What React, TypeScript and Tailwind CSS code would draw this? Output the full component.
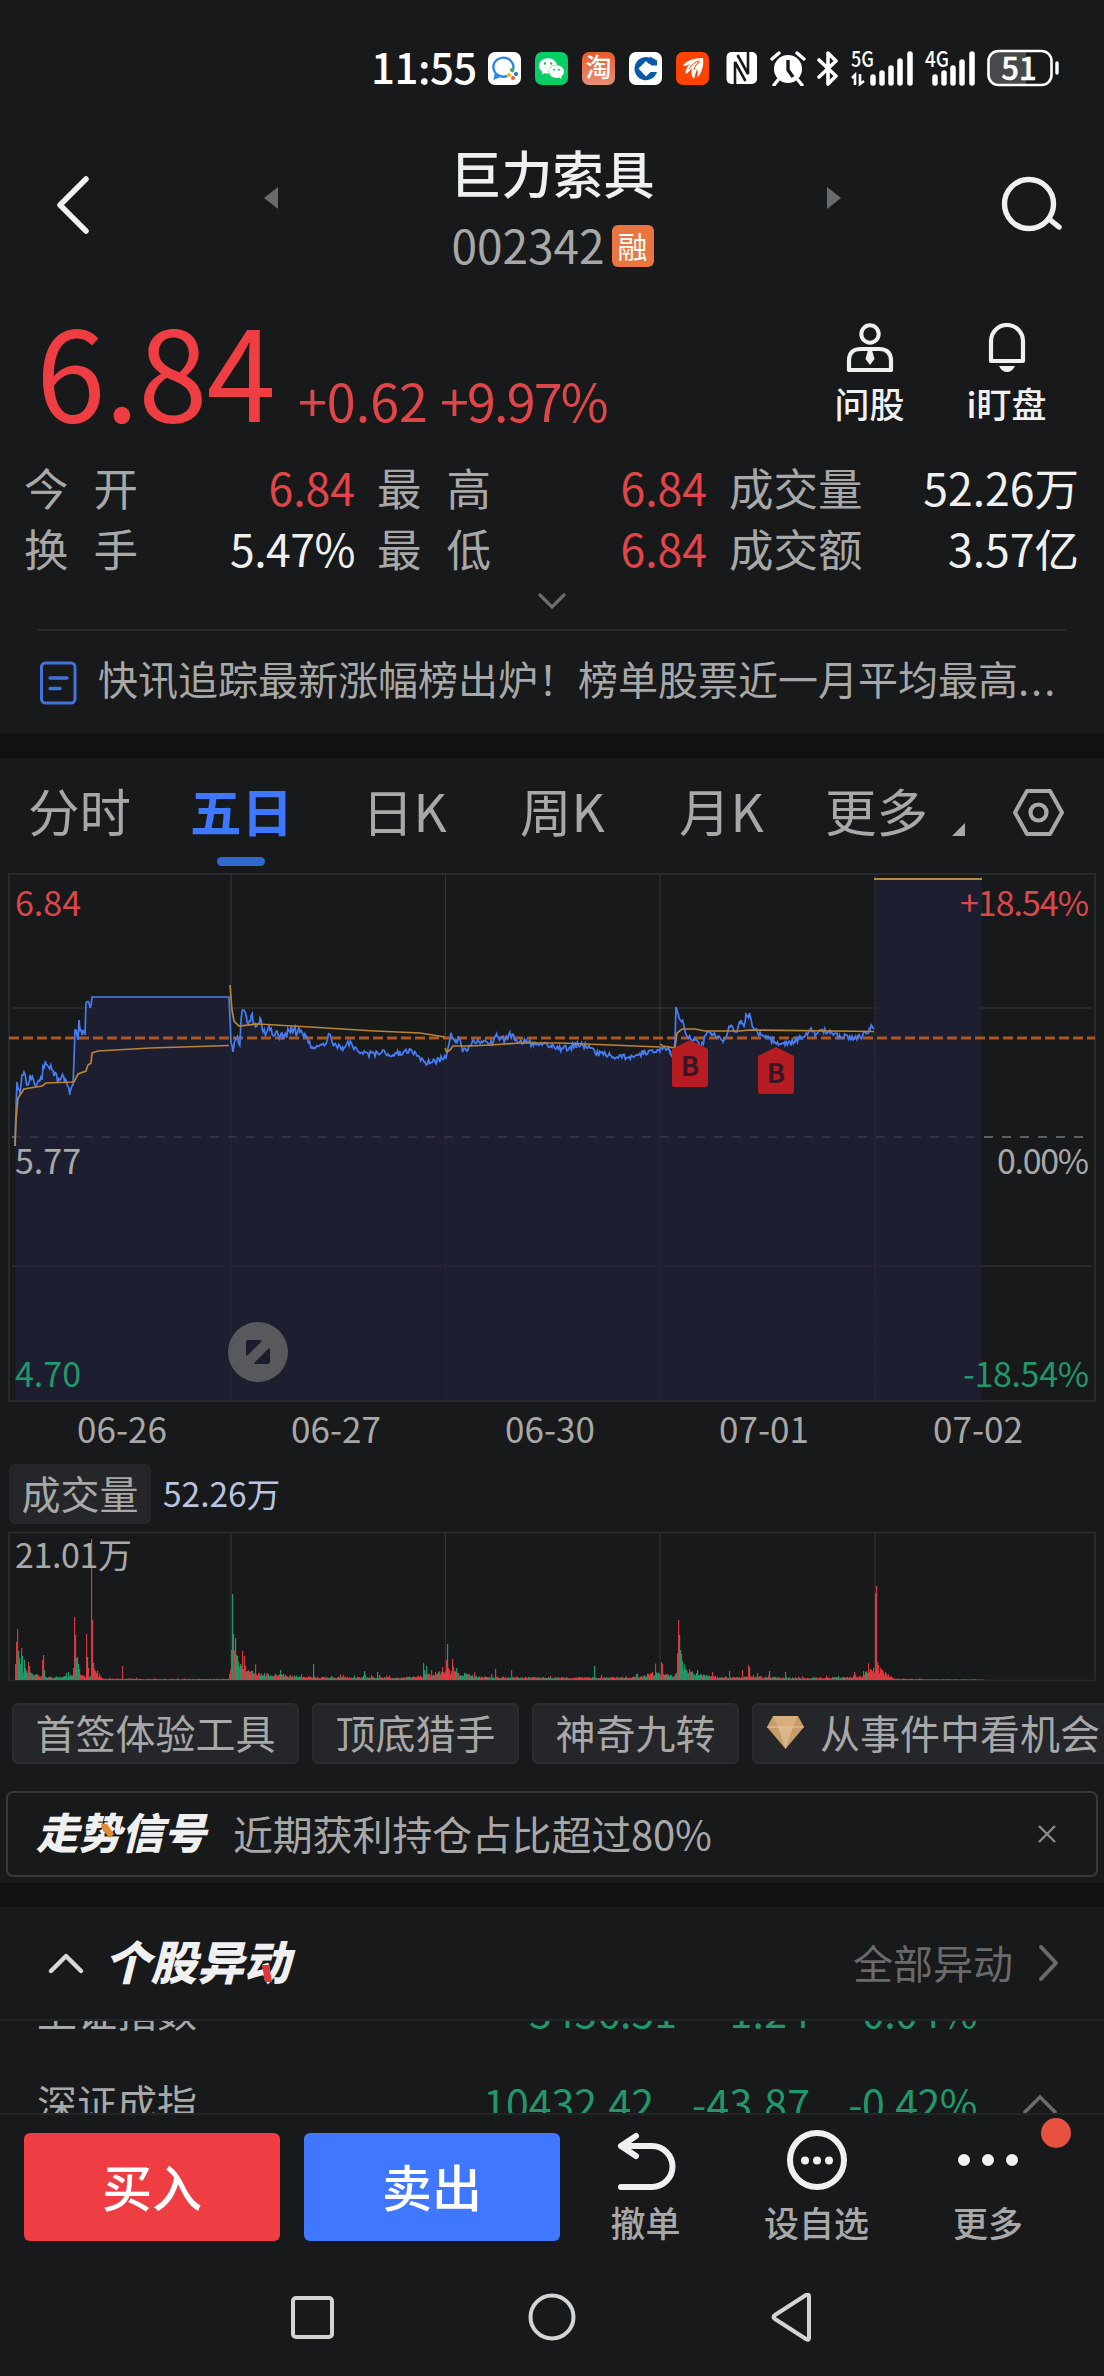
import React from 'react';
import { SiWechat } from 'react-icons/si';

type Point = [number, number];
type Spike = [number, number, 'r' | 'g'];

const RED = '#d8393e';
const GREEN = '#22976a';

const stats = [
  { label: ['今', '开'], value: '6.84', tone: 'text-[#e24549]' },
  { label: ['最', '高'], value: '6.84', tone: 'text-[#e24549]' },
  { label: ['成', '交', '量'], value: '52.26万', tone: 'text-[#f0f0f0]' },
  { label: ['换', '手'], value: '5.47%', tone: 'text-[#f0f0f0] tracking-[-0.5px]' },
  { label: ['最', '低'], value: '6.84', tone: 'text-[#e24549]' },
  { label: ['成', '交', '额'], value: '3.57亿', tone: 'text-[#f0f0f0]' },
];

const tabs = [
  { label: '分时', width: 'w-[162px]' },
  { label: '五日', width: 'w-[172px]', active: true },
  { label: '日K', width: 'w-[158px]' },
  { label: '周K', width: 'w-[159px]' },
  { label: '月K', width: 'w-[146px]' },
  { label: '更多', width: 'w-[127px]' },
];

const dates = ['06-26', '06-27', '06-30', '07-01', '07-02'];
const tools = ['首签体验工具', '顶底猎手', '神奇九转'];

const indices = [
  { name: '上证指数', value: '3456.51', change: '-1.24', percent: '-0.04%' },
  { name: '深证成指', value: '10432.42', change: '-43.87', percent: '-0.42%' },
];

const pricePoints: Point[] = [
  [15, 1146], [17, 1082], [20, 1094], [22, 1075], [24, 1072], [27, 1085], [30, 1075], [36, 1086], [42, 1080],
  [43, 1066], [46, 1064], [52, 1070], [54, 1076], [60, 1080], [65, 1078], [70, 1092], [73, 1085], [74, 1060],
  [75, 1030], [78, 1040], [79, 1020], [82, 1035], [85, 1035], [86, 1003], [90, 1008], [92, 997], [229, 997],
  [231, 1042], [233, 1052], [235, 1040], [240, 1042], [241, 1020], [243, 1010], [247, 1022], [251, 1016],
  [256, 1024], [260, 1018], [263, 1032], [270, 1030], [283, 1038], [289, 1030], [300, 1032], [306, 1036],
  [312, 1048], [322, 1044], [325, 1045], [329, 1034], [334, 1044], [343, 1050], [348, 1042], [363, 1054],
  [378, 1054], [383, 1050], [388, 1054], [400, 1053], [410, 1050], [417, 1056], [425, 1062], [435, 1062],
  [445, 1057], [446, 1058], [448, 1048], [451, 1033], [456, 1040], [459, 1038], [463, 1051], [470, 1046],
  [473, 1040], [493, 1043], [497, 1036], [505, 1040], [510, 1034], [516, 1040], [525, 1042], [535, 1044],
  [552, 1045], [556, 1049], [569, 1048], [578, 1044], [590, 1048], [595, 1053], [610, 1055], [617, 1057],
  [635, 1056], [645, 1052], [655, 1052], [660, 1049], [670, 1050], [673, 1058], [675, 1040], [676, 1007],
  [679, 1018], [683, 1022], [686, 1034], [695, 1040], [701, 1048], [707, 1032], [712, 1034], [718, 1036],
  [723, 1042], [730, 1027], [737, 1032], [741, 1020], [744, 1026], [746, 1014], [750, 1016], [754, 1030],
  [762, 1035], [775, 1042], [785, 1045], [795, 1042], [800, 1036], [805, 1036], [811, 1028], [815, 1036],
  [820, 1030], [830, 1033], [840, 1037], [860, 1037], [870, 1030], [872, 1026], [874, 1029],
];

const averageDays = [
  '15,1146 16,1120 18,1098 24,1089 42,1086 46,1083 74,1082 78,1074 86,1071 88,1065 91,1063 92,1053 98,1051 150,1048 229,1045.5',
  '230,985 231,998 232,1010 234,1021 239,1026 258,1024 310,1027 375,1031 420,1033 445,1037',
  '445,1048 447,1052 450,1050 453,1046 470,1046 490,1045 520,1043 560,1043 610,1045 660,1047',
  '660,1044 663,1046 675,1048 677,1033 682,1029 695,1029 705,1031 740,1031 750,1030 874,1031.5',
];

const spikes: Spike[] = [
  [15, 16, 'r'], [16, 38, 'r'], [17, 51, 'r'], [18, 29, 'g'], [19, 22, 'g'], [20, 16, 'g'], [21, 32, 'r'], [22, 24, 'g'],
  [24, 20, 'g'], [25, 12, 'g'], [28, 18, 'r'], [29, 14, 'r'], [42, 20, 'r'], [43, 25, 'r'], [44, 10, 'g'],
  [66, 7, 'g'], [68, 8, 'g'], [73, 12, 'r'], [74, 63, 'r'], [75, 45, 'r'], [76, 22, 'g'], [77, 23, 'r'], [78, 16, 'g'], [79, 11, 'r'],
  [86, 46, 'r'], [87, 23, 'g'], [88, 12, 'r'], [91, 141, 'r'], [92, 60, 'r'], [93, 17, 'r'], [94, 11, 'r'], [95, 9, 'r'], [96, 7, 'r'],
  [122, 14, 'r'], [231, 30, 'r'], [232, 86, 'g'], [233, 46, 'r'], [234, 30, 'r'], [235, 42, 'g'], [236, 25, 'g'], [237, 24, 'g'],
  [238, 18, 'g'], [239, 13, 'r'], [240, 16, 'g'], [241, 14, 'r'], [242, 29, 'r'], [244, 24, 'r'], [245, 14, 'r'], [313, 16, 'g'],
  [364, 9, 'g'], [377, 8, 'g'], [423, 17, 'g'], [424, 10, 'g'], [426, 14, 'g'], [446, 20, 'r'], [447, 36, 'g'], [448, 12, 'r'],
  [452, 21, 'r'], [453, 13, 'r'], [456, 12, 'g'], [495, 11, 'r'], [511, 10, 'r'], [594, 14, 'g'], [661, 18, 'r'], [662, 16, 'r'],
  [677, 27, 'r'], [678, 60, 'r'], [679, 45, 'g'], [680, 30, 'g'], [681, 26, 'r'], [682, 19, 'g'], [684, 13, 'g'], [686, 10, 'g'],
  [697, 10, 'g'], [712, 8, 'r'], [729, 9, 'r'], [742, 10, 'r'], [748, 15, 'r'], [749, 13, 'g'], [757, 7, 'g'], [769, 9, 'g'],
  [785, 8, 'g'], [854, 8, 'r'], [863, 9, 'r'], [869, 8, 'r'], [871, 10, 'r'], [873, 12, 'r'], [875, 87, 'r'], [876, 94, 'r'],
  [877, 18, 'r'], [878, 15, 'r'], [880, 12, 'r'], [882, 9, 'r'], [886, 6, 'r'],
];

// [x, average height, share of green bars]
const volumeLevels: [number, number, number][] = [
  [14, 10, 0.5], [30, 8, 0.6], [40, 4, 0.5], [50, 3, 0.6], [72, 4, 0.6], [80, 6, 0.5], [84, 3, 0.5], [97, 5, 0], [102, 1.5, 0.05],
  [150, 1, 0.1], [228, 1, 0], [231, 14, 0.5], [250, 8, 0.5], [290, 4, 0.4], [320, 3, 0.4], [400, 2.5, 0.4], [420, 4, 0.3],
  [445, 9, 0.2], [460, 7, 0.5], [480, 3, 0.5], [560, 2.5, 0.3], [640, 3, 0.5], [655, 8, 0.5], [672, 4, 0.5], [682, 12, 0.8],
  [700, 5, 0.5], [720, 2.5, 0.4], [760, 3, 0.5], [800, 2, 0.2], [860, 3, 0.1], [870, 10, 0], [878, 11, 0], [888, 5, 0],
  [894, 1.5, 0], [920, 0.8, 0], [983, 0.5, 0], [984, 0, 0],
];

const random = (seed: number) => () => {
  seed = (seed * 16807) % 2147483647;
  return seed / 2147483647;
};

const jitter = (points: Point[]) => {
  const next = random(97);
  const out: Point[] = [];
  points.forEach(([x, y], i) => {
    out.push([x, y]);
    const following = points[i + 1];
    if (!following) return;
    const [nx, ny] = following;
    const flat = y === 997 && ny === 997;
    for (let s = x + 1.2; s < nx && !flat; s += 1.2) {
      const amp = s < 110 || (s > 230 && s < 300) ? 10 : 6;
      out.push([s, y + ((ny - y) * (s - x)) / (nx - x) + (next() - 0.5) * amp]);
    }
  });
  return out.map((p) => `${p[0].toFixed(1)},${p[1].toFixed(1)}`).join(' ');
};

const priceLine = jitter(pricePoints);

const buildVolume = () => {
  const next = random(31);
  const bars: { x: number; h: number; color: string }[] = [];
  for (let x = 15; x < 984; x++) {
    const i = volumeLevels.findIndex((l) => l[0] > x) - 1;
    const [x0, h0, green] = volumeLevels[i];
    const [x1, h1] = volumeLevels[i + 1];
    const level = h0 + ((h1 - h0) * (x - x0)) / (x1 - x0);
    const burst = next() > 0.93 ? 1.8 : 1;
    bars.push({ x, h: level * (0.6 + next() * 0.6) * burst, color: next() < green ? GREEN : RED });
  }
  spikes.forEach(([x, h, c]) => bars.push({ x, h, color: c === 'g' ? GREEN : RED }));
  return bars;
};

const volumeBars = buildVolume();
const dayLines = [231, 445.5, 660, 875];

const StatusBar = () => (
  <div className="flex h-[136px] items-center pl-[371px] text-white">
    <span className="-mt-[5px] w-[117px] text-[42px] leading-none font-medium tracking-[-0.5px]">11:55</span>
    <div className="flex gap-[14px]">
      <svg className="h-[33px] w-[33px]" viewBox="0 0 33 33">
        <rect width="33" height="33" rx="7" fill="#fff" />
        <path d="M24 20a10 9.5 0 1 0-5 4M8 21l-1 5 5-2" fill="none" stroke="#2a86e8" strokeWidth="2.4" />
        <circle cx="24" cy="18" r="2" fill="#3bb54a" />
        <circle cx="21" cy="23" r="2" fill="#f7b500" />
        <circle cx="28" cy="22" r="2" fill="#1b6fd8" />
        <circle cx="25" cy="26" r="2" fill="#f0612c" />
      </svg>
      <span className="flex h-[33px] w-[33px] items-center justify-center rounded-[7px] bg-[#07cf66]">
        <SiWechat size={25} />
      </span>
      <span className="flex h-[33px] w-[33px] items-center justify-center rounded-[7px] bg-linear-to-b from-[#e95b22] to-[#e88d77] text-[26px] leading-[26px] font-medium">
        <span className="-mt-[5px]">淘</span>
      </span>
      <svg className="h-[33px] w-[33px]" viewBox="0 0 33 33">
        <rect width="33" height="33" rx="7" fill="#fff" />
        <path d="M20 5.500A11.500 11.500 0 1 0 28 20h-6.500L17 24.500 9.500 16.500 17 9l3 3 3-3z" fill="#0a5aa8" />
        <path d="M21 4.500l7 4v5h-5.500L19 10z" fill="#0a5aa8" />
      </svg>
      <svg className="h-[33px] w-[33px]" viewBox="0 0 33 33">
        <rect width="33" height="33" rx="7" fill="#ff4400" />
        <path d="M27 6C17 6 9 9 7 14c3 0 5-1 7-2-3 3-5 6-4 10 2-1 4-4 6-6-1 4-1 8 2 11 1-4 2-7 3-10 1 3 1 6 0 9 5-5 7-13 6-20z" fill="#fff" />
        <path d="M13 17c2-4 6-7 10-8M18 18c1-4 3-7 6-8" fill="none" stroke="#ff4400" strokeWidth="1" />
      </svg>
    </div>
    <svg className="ml-[16px] h-[34px] w-[33px]" viewBox="0 0 33 34">
      <rect x="1.500" y="1" width="30.500" height="32" rx="5" fill="#fff" />
      <path d="M10 34V11l10.500 19M23 0v23L12.500 4" fill="none" stroke="#17191a" strokeWidth="2.600" />
    </svg>
    <svg className="ml-[12px] h-[35px] w-[36px]" viewBox="0 0 36 35">
      <circle cx="18" cy="18" r="14" fill="#fff" />
      <path d="M2 8l7-6M34 8l-7-6M8 29l-4 5M28 29l4 5" stroke="#fff" strokeWidth="3.4" strokeLinecap="round" />
      <path d="M18 9v10l5 7" fill="none" stroke="#17191a" strokeWidth="3.4" />
    </svg>
    <svg className="ml-[10px] h-[35px] w-[25px]" viewBox="0 0 25 35">
      <path d="M3 9l17 16-8 8V2l8 8L3 26" fill="none" stroke="#fff" strokeWidth="3.6" strokeLinejoin="round" strokeLinecap="round" />
    </svg>
    <svg className="ml-[10px] h-[36px] w-[64px] overflow-visible" viewBox="0 0 64 36">
      <text x="0" y="17" fontSize="22" fontWeight="500" fill="#fff" textLength="23" lengthAdjust="spacingAndGlyphs">5G</text>
      <path d="M4 35V25l-3 3M9 24v10l4-3" fill="none" stroke="#fff" strokeWidth="2.6" />
      <path d="M22 33v-6M31 33V23M40 33V18M49 33V11M59 33V4" stroke="#fff" strokeWidth="5.5" strokeLinecap="round" />
    </svg>
    <svg className="ml-[10px] h-[36px] w-[52px] overflow-visible" viewBox="0 0 52 36">
      <text x="0" y="17" fontSize="22" fontWeight="500" fill="#fff" textLength="24" lengthAdjust="spacingAndGlyphs">4G</text>
      <path d="M10 33v-6M19 33V23M28 33V18M37 33V12M47 33V4" stroke="#fff" strokeWidth="5.5" strokeLinecap="round" />
    </svg>
    <svg className="ml-[10px] h-[38px] w-[75px] overflow-visible" viewBox="0 0 75 38">
      <path d="M10 2h29v34H10a8 8 0 0 1-8-8V10a8 8 0 0 1 8-8z" fill="#48494b" />
      <rect x="1.5" y="2" width="63" height="34" rx="10" fill="none" stroke="#fff" strokeWidth="2.6" />
      <path d="M70 14v10" stroke="#fff" strokeWidth="3.4" strokeLinecap="round" />
      <text x="32" y="30.500" fontSize="31" fontWeight="500" textAnchor="middle" fill="#fff" stroke="#fff" strokeWidth="0.500">51</text>
    </svg>
  </div>
);

const Header = () => (
  <header className="flex h-[149px] items-start">
    <svg className="mt-[40px] ml-[56px] h-[58px] w-[34px]" viewBox="0 0 34 58">
      <path d="M30 3L4 29l26 26" fill="none" stroke="#f0f0f0" strokeWidth="5.5" strokeLinecap="round" strokeLinejoin="round" />
    </svg>
    <svg className="mt-[50px] ml-[174px] h-[24px] w-[14px]" viewBox="0 0 14 24">
      <path d="M14 1v22L0 12z" fill="#6a6a6a" />
    </svg>
    <div className="flex w-[549px] flex-col items-center">
      <h1 className="mt-[6px] text-[51px] leading-[60px] font-medium text-[#f0f0f0]">巨力索具</h1>
      <div className="mt-[23px] flex h-[42px] items-center gap-[7px] text-[46px] leading-none text-[#a8a8a8]">
        <span className="-mt-[5px]">002342</span>
        <span className="flex h-[42px] w-[42px] items-center justify-center rounded-[6px] bg-[#e8763e] text-[30px] text-white">
          <span className="-mt-[3px]">融</span>
        </span>
      </div>
    </div>
    <svg className="mt-[50px] h-[24px] w-[14px]" viewBox="0 0 14 24">
      <path d="M0 1v22l14-11z" fill="#6a6a6a" />
    </svg>
    <svg className="mt-[40px] ml-[160px] h-[56px] w-[62px]" viewBox="0 0 62 56">
      <circle cx="28" cy="28" r="24.5" fill="none" stroke="#f0f0f0" strokeWidth="5.4" />
      <path d="M48 43l10 8" stroke="#f0f0f0" strokeWidth="5.4" strokeLinecap="round" />
    </svg>
  </header>
);

const PriceRow = () => (
  <div className="flex h-[167px] items-start">
    <div className="flex items-baseline pt-[20px] pl-[36px] text-[#ee3e43]">
      <span className="w-[262px] text-[125px] leading-[125px] tracking-[-1px]">6.84</span>
      <span className="text-[52px] leading-none text-[#e04549]">+0.62</span>
      <span className="ml-[12px] text-[52px] leading-none tracking-[-1.8px] text-[#e04549]">+9.97%</span>
    </div>
    <div className="mr-[29px] ml-auto flex pt-[38px] text-[35px] leading-none font-medium text-[#f0f0f0]">
      <div className="flex w-[137px] flex-col items-center">
        <svg className="h-[49px] w-[48px]" viewBox="0 0 48 49">
          <circle cx="24" cy="11" r="8.7" fill="none" stroke="#f0f0f0" strokeWidth="4" />
          <path d="M3 47V38q0-12 12-12h18q12 0 12 12v9z" fill="none" stroke="#f0f0f0" strokeWidth="4.2" strokeLinejoin="round" />
          <path d="M22 27h4l2.500 9L24 42l-4.500-6z" fill="#f0f0f0" />
        </svg>
        <span className="mt-[13px]">问股</span>
      </div>
      <div className="flex w-[137px] flex-col items-center">
        <svg className="h-[49px] w-[38px]" viewBox="0 0 38 49">
          <path d="M3 38V18a16 16 0 0 1 32 0v20z" fill="none" stroke="#f0f0f0" strokeWidth="4.2" strokeLinejoin="round" />
          <path d="M11 43h16q-3 6-8 6t-8-6z" fill="#f0f0f0" />
        </svg>
        <span className="mt-[13px]">i盯盘</span>
      </div>
    </div>
  </div>
);

const Stats = () => (
  <div className="grid grid-cols-[331px_330px_350px] gap-x-[22px] pt-[5px] pl-[24px] text-[44.500px]">
    {stats.map((stat) => (
      <div key={stat.label.join('')} className="flex h-[61px] items-center justify-between leading-none text-[#a8a8a8]">
        <span className={stat.label.length === 2 ? 'flex gap-[25px]' : 'flex'}>
          {stat.label.map((char) => (
            <span key={char}>{char}</span>
          ))}
        </span>
        <span className={stat.tone}>{stat.value}</span>
      </div>
    ))}
  </div>
);

const News = () => (
  <>
    <svg className="mx-auto mt-[14px] h-[16px] w-[28px]" viewBox="0 0 28 16">
      <path d="M2 2l12 12L26 2" fill="none" stroke="#6c6c6c" strokeWidth="3.2" strokeLinecap="round" />
    </svg>
    <div className="mt-[20px] ml-[37px] h-[2px] w-[1029px] bg-[#28292b]" />
    <div className="flex h-[103px] items-center pl-[40px]">
      <svg className="h-[44px] w-[37px]" viewBox="0 0 37 44">
        <rect x="1.500" y="2" width="33.500" height="40" rx="4" fill="none" stroke="#4273dc" strokeWidth="3" />
        <path d="M10 17h17M10 27.500h10" stroke="#4273dc" strokeWidth="3.400" strokeLinecap="round" />
      </svg>
      <span className="-mt-[9px] ml-[21px] text-[40px] leading-none whitespace-nowrap text-[#a8a8a8]">
        快讯追踪最新涨幅榜出炉！榜单股票近一月平均最高<span className="tracking-[2px]">...</span>
      </span>
    </div>
  </>
);

const Tabs = () => (
  <div className="flex h-[115px] pl-[28px]">
    {tabs.map((tab) => (
      <div key={tab.label} className={`relative pt-[27px] text-[51.500px] leading-[50px] ${tab.width}`}>
        <span className={tab.active ? 'font-bold text-[#3f78ff]' : 'text-[#a8a8a8]'}>{tab.label}</span>
        {tab.active && <span className="absolute top-[99px] left-[27px] h-[9px] w-[48px] rounded-full bg-[#3267cf]" />}
      </div>
    ))}
    <svg className="mt-[65px] h-[13px] w-[13px]" viewBox="0 0 13 13">
      <path d="M13 0v13H0z" fill="#a8a8a8" />
    </svg>
    <svg className="mt-[31px] ml-[48px] h-[47px] w-[51px]" viewBox="0 0 51 47">
      <path d="M14 2h23l12 21.500L37 45H14L2 23.500z" fill="none" stroke="#a8a8a8" strokeWidth="4" strokeLinejoin="round" />
      <circle cx="25.500" cy="23.500" r="8" fill="none" stroke="#a8a8a8" strokeWidth="4.200" />
    </svg>
  </div>
);

const BuyMark = ({ x, y }: { x: number; y: number }) => (
  <g>
    <path d={`M${x} ${y}l18 9v36q0 2-2 2h-32q-2 0-2-2v-36z`} fill="#b71c22" />
    <text x={x} y={y + 36} fontSize="27" fontWeight="700" textAnchor="middle" fill="#3c1524">B</text>
  </g>
);

const PriceChart = () => (
  <svg className="block h-[531px] w-[1104px]" viewBox="0 873 1104 531">
    <path d="M9 874H1095V1401H9z" fill="none" stroke="#28292b" strokeWidth="2" />
    <path d="M12 1008H1092M12 1266H1092" stroke="#28292b" strokeWidth="2" />
    {dayLines.map((x) => (
      <path key={x} d={`M${x} 874V1401`} stroke="#323335" strokeWidth="1.200" />
    ))}
    <path d="M12 1137H1092" stroke="#606062" strokeWidth="2" strokeDasharray="9 9" />
    <polygon points={`15,1401 ${priceLine} 875,1401`} fill="#202037" fillOpacity="0.75" />
    <path d="M875 879H982V1401H875z" fill="#202037" fillOpacity="0.75" />
    <path d="M9 1038H1095" stroke="#b0561f" strokeWidth="3.200" strokeDasharray="10 4" />
    <polyline points={priceLine} fill="none" stroke="#477df2" strokeWidth="1.700" />
    {averageDays.map((points) => (
      <polyline key={points} points={points} fill="none" stroke="#b98435" strokeWidth="1.700" />
    ))}
    <path d="M874 879H982" stroke="#b58a3c" strokeWidth="2" />
    <BuyMark x={690} y={1040} />
    <BuyMark x={776} y={1047} />
    <g fontSize="34">
      <text x="15" y="916" fill="#d9484b">6.84</text>
      <text x="15" y="1174" fill="#a8a8a8">5.77</text>
      <text x="15" y="1387" fill="#22976a">4.70</text>
      <text x="1089" y="916" fill="#d9484b" textAnchor="end" textLength="129">+18.54%</text>
      <text x="1089" y="1174" fill="#a8a8a8" textAnchor="end" textLength="92">0.00%</text>
      <text x="1089" y="1387" fill="#22976a" textAnchor="end" textLength="126">-18.54%</text>
    </g>
    <circle cx="258" cy="1352" r="30" fill="#58595c" />
    <path d="M248 1340h12q3 0 1 2l-13 13q-2 2-2-1v-12q0-2 2-2zM268 1364h-12q-3 0-1-2l13-13q2-2 2 1v12q0 2-2 2z" fill="#1c1d2c" />
  </svg>
);

const VolumeChart = () => (
  <svg className="mt-[7px] block h-[151px] w-[1104px]" viewBox="0 1531 1104 151">
    <path d="M9 1532.500H1095V1680.500H9z" fill="none" stroke="#28292b" strokeWidth="2" />
    {dayLines.map((x) => (
      <path key={x} d={`M${x} 1533V1680`} stroke="#323335" strokeWidth="1.200" />
    ))}
    {volumeBars.map((bar, i) => (
      <rect key={i} x={bar.x} y={1680 - bar.h} width="1.200" height={bar.h} fill={bar.color} />
    ))}
    <text x="15" y="1568" fontSize="34" fill="#a8a8a8" textLength="117">21.01万</text>
  </svg>
);

const Volume = () => (
  <>
    <div className="flex h-[60px] pt-[7px] pl-[15px] text-[35px] leading-[34px] text-[#a8a8a8]">
      {dates.map((date) => (
        <span key={date} className="w-[214px] text-center">{date}</span>
      ))}
    </div>
    <div className="flex h-[60px] items-center pl-[9px]">
      <span className="h-[60px] w-[142px] rounded-[6px] bg-[#25262a] pt-[8px] text-center text-[39px] leading-[40px] text-[#a8a8a8]">
        成交量
      </span>
      <span className="-mt-[2px] ml-[12px] text-[33.500px] leading-none text-[#b8c4e0]">52.26万</span>
    </div>
    <VolumeChart />
  </>
);

const Tools = () => (
  <div className="mt-[21px] flex gap-[13px] overflow-hidden pl-[12px] text-[40px] leading-[40px] whitespace-nowrap text-[#a8a8a8]">
    {tools.map((tool) => (
      <span key={tool} className="h-[61px] shrink-0 rounded-[6px] border-2 border-[#2b2c30] bg-[#25262a] px-[21.500px] pt-[7px]">
        {tool}
      </span>
    ))}
    <span className="flex h-[61px] w-[370px] shrink-0 rounded-[6px] border-2 border-[#2b2c30] bg-[#25262a] pt-[7px] pl-[13px]">
      <svg className="mt-[3px] mr-[16px] h-[34px] w-[37px]" viewBox="0 0 37 34">
        <path d="M6 1h25l6 11-18.500 22L0 12z" fill="#c89c68" />
        <path d="M6 1h25l-5 11H11z" fill="#d8ae7e" />
        <path d="M11 12h15l-7.500 22z" fill="#d9b68c" />
        <path d="M0 12h37" stroke="#e3c49c" strokeWidth="1" />
      </svg>
      从事件中看机会
    </span>
  </div>
);

const Signal = () => (
  <div className="mt-[27px] ml-[6px] flex h-[86px] w-[1092px] items-center rounded-[7px] border-2 border-[#38393b] pl-[28px]">
    <span className="relative -mt-[6px] w-[197px] text-[42.500px] leading-none font-black text-[#f0f0f0] italic">
      走势信号
      <svg className="absolute top-[14px] left-[65px] h-[14px] w-[13px]" viewBox="0 0 13 14">
        <path d="M0 0h6l7 10-4 4-7-7z" fill="#e08a35" />
      </svg>
    </span>
    <span className="-mt-[3px] text-[40px] leading-none tracking-[-0.2px] text-[#a8a8a8]">近期获利持仓占比超过80%</span>
    <svg className="mr-[39px] ml-auto h-[20px] w-[20px]" viewBox="0 0 20 20">
      <path d="M2 2l16 16M18 2L2 18" stroke="#8a8a8a" strokeWidth="2.400" />
    </svg>
  </div>
);

const Movers = () => (
  <>
    <div className="flex h-[114px] items-center border-b-2 border-[#242527] pl-[48px]">
      <svg className="h-[22px] w-[36px]" viewBox="0 0 36 22">
        <path d="M3 19L18 4l15 15" fill="none" stroke="#d8d8d8" strokeWidth="4.400" strokeLinecap="round" strokeLinejoin="round" />
      </svg>
      <span className="relative -mt-[5px] ml-[20px] text-[46.500px] leading-none font-black text-[#f0f0f0] italic">
        个股异动
        <svg className="absolute top-[28px] left-[158px] h-[17px] w-[10px]" viewBox="0 0 10 17">
          <path d="M0 0h7l3 17H3z" fill="#e0353a" />
        </svg>
      </span>
      <span className="-mt-[3px] ml-auto text-[40px] leading-none text-[#6a6a6a]">全部异动</span>
      <svg className="mr-[44px] ml-[25px] h-[38px] w-[22px]" viewBox="0 0 22 38">
        <path d="M3 3l15 16L3 35" fill="none" stroke="#6a6a6a" strokeWidth="4" strokeLinecap="round" strokeLinejoin="round" />
      </svg>
    </div>
    <div className="relative h-[92px] overflow-hidden">
      <div className="-mt-[57px]">
        {indices.map((row) => (
          <div key={row.name} className="flex h-[92px] items-center pr-[127px] pl-[37px] text-[40px] leading-none text-[#a8a8a8]">
            <span className="mr-auto">{row.name}</span>
            <span className="flex gap-[38px] text-[41px] text-[#22976a]">
              <span>{row.value}</span>
              <span className="tracking-[0.3px]">{row.change}</span>
              <span className="tracking-[-0.500px]">{row.percent}</span>
            </span>
          </div>
        ))}
      </div>
      <svg className="absolute top-[72px] right-[46px] h-[22px] w-[36px]" viewBox="0 0 36 22">
        <path d="M3 19L18 4l15 15" fill="none" stroke="#6a6a6a" strokeWidth="3.600" strokeLinecap="round" />
      </svg>
    </div>
  </>
);

const ActionBar = () => (
  <div className="relative flex h-[149px] border-t-2 border-[#242527] pt-[18px] pl-[24px] text-[50px] leading-[98px] font-medium text-white">
    <button className="flex h-[108px] w-[256px] justify-center rounded-[6px] bg-[#ee3e43] pt-[3px]">买入</button>
    <button className="ml-[24px] flex h-[108px] w-[256px] justify-center rounded-[6px] bg-[#3f78ff] pt-[3px]">卖出</button>
    <div className="-mt-[4px] flex text-[35px] leading-none text-[#a8a8a8]">
      <div className="flex w-[171px] flex-col items-center">
        <svg className="h-[62px] w-[60px]" viewBox="0 0 60 62">
          <path d="M5 17h31a20 20 0 0 1 0 41H5M20 7L5 17l15 10" fill="none" stroke="#f0f0f0" strokeWidth="6" strokeLinecap="round" strokeLinejoin="round" />
        </svg>
        <span className="mt-[13px]">撤单</span>
      </div>
      <div className="flex w-[171px] flex-col items-center">
        <svg className="h-[62px] w-[62px]" viewBox="0 0 62 62">
          <circle cx="31" cy="31" r="27" fill="none" stroke="#f0f0f0" strokeWidth="6" />
          <path d="M19 31.500h.01M31 31.500h.01M43 31.500h.01" stroke="#f0f0f0" strokeWidth="8" strokeLinecap="round" />
        </svg>
        <span className="mt-[13px]">设自选</span>
      </div>
      <div className="flex w-[172px] flex-col items-center">
        <svg className="h-[62px] w-[62px]" viewBox="0 0 62 62">
          <path d="M7 31h.01M31 31h.01M55 31h.01" stroke="#f0f0f0" strokeWidth="12" strokeLinecap="round" />
        </svg>
        <span className="mt-[13px]">更多</span>
      </div>
    </div>
    <span className="absolute top-[3px] right-[33px] h-[30px] w-[30px] rounded-full bg-[#e85040]" />
  </div>
);

const SystemNav = () => (
  <nav className="flex h-[112px] items-center pl-[290px]">
    <svg className="h-[50px] w-[522px]" viewBox="0 0 522 50">
      <rect x="3" y="5" width="39" height="39" rx="3" fill="none" stroke="#d4d4d4" strokeWidth="4" />
      <circle cx="262" cy="24" r="21.500" fill="none" stroke="#d4d4d4" strokeWidth="4" />
      <path d="M519 4v41q0 3-3 1l-31-20q-3-2 0-4l31-20q3-2 3 2z" fill="none" stroke="#d4d4d4" strokeWidth="4" strokeLinejoin="round" />
    </svg>
  </nav>
);

const App = () => {
  return (
    <div
      lang="zh-CN"
      className="h-[2376px] w-[1104px] overflow-hidden bg-[#17191a] font-['Noto_Sans_CJK_SC','Liberation_Sans',sans-serif]"
    >
      <StatusBar />
      <Header />
      <PriceRow />
      <Stats />
      <News />
      <div className="h-[24px] bg-[#101113]" />
      <Tabs />
      <PriceChart />
      <Volume />
      <Tools />
      <Signal />
      <div className="mt-[6px] h-[24px] bg-[#101113]" />
      <Movers />
      <ActionBar />
      <SystemNav />
    </div>
  );
};

export default App;
